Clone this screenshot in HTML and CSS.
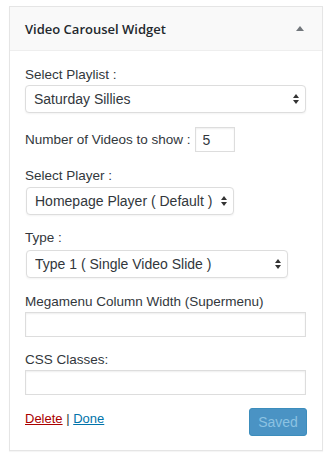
FILE: index.html
```html
<!DOCTYPE html>
<html lang="en">
<head>
  <meta charset="UTF-8" />
  <meta name="viewport" content="width=device-width, initial-scale=1.0"/>
  <title>Video Carousel Widget</title>
  <link rel="stylesheet" href="styles.css">
</head>
<body>
  <div class="widget">
    <div class="widget-top">
      <h3>Video Carousel Widget</h3>
      <span class="toggle"></span>
    </div>

    <form class="widget-inside">
      <div class="field first">
        <label for="playlist">Select Playlist :</label>
        <div class="select-wrap wide">
          <select id="playlist">
            <option>Saturday Sillies</option>
          </select>
          <svg class="arrows" width="6" height="10" viewBox="0 0 6 10"><path d="M3 0L6 4H0z M3 10L6 6H0z"/></svg>
        </div>
      </div>

      <div class="field inline">
        <label for="count">Number of Videos to show :</label>
        <input type="text" id="count" class="small" value="5">
      </div>

      <div class="field player-field">
        <label for="player">Select Player :</label>
        <div class="select-wrap player">
          <select id="player">
            <option>Homepage Player ( Default )</option>
          </select>
          <svg class="arrows" width="6" height="10" viewBox="0 0 6 10"><path d="M3 0L6 4H0z M3 10L6 6H0z"/></svg>
        </div>
      </div>

      <div class="field type-field">
        <label for="type">Type :</label>
        <div class="select-wrap type">
          <select id="type">
            <option>Type 1 ( Single Video Slide )</option>
          </select>
          <svg class="arrows" width="6" height="10" viewBox="0 0 6 10"><path d="M3 0L6 4H0z M3 10L6 6H0z"/></svg>
        </div>
      </div>

      <div class="field text-field">
        <label for="colwidth">Megamenu Column Width (Supermenu)</label>
        <input type="text" id="colwidth" class="wide-input">
      </div>

      <div class="field text-field last">
        <label for="classes">CSS Classes:</label>
        <input type="text" id="classes" class="wide-input">
      </div>

      <div class="widget-control">
        <div class="links">
          <a href="#" class="delete">Delete</a> | <a href="#" class="done">Done</a>
        </div>
        <button type="button" class="save-btn" disabled>Saved</button>
      </div>
    </form>
  </div>
</body>
</html>
```

FILE: styles.css
```css
body {
  margin: 0;
  padding: 6px 9px;
  background: #fff;
  font-family: "Liberation Sans", Arial, sans-serif;
  font-size: 13px;
  color: #32373c;
}

.widget {
  width: 314px;
  box-sizing: border-box;
  border: 1px solid #e5e5e5;
  box-shadow: 0 1px 1px rgba(0,0,0,0.04);
  background: #fff;
}

.widget-top {
  display: flex;
  justify-content: space-between;
  align-items: center;
  height: 43px;
  padding: 0 18px 0 15px;
  background: #f9f9f9;
  border-bottom: 1px solid #eee;
}

.widget-top h3 {
  margin: 0;
  font-family: "Open Sans", sans-serif;
  font-size: 13px;
  font-weight: 600;
  color: #23282d;
}

.toggle {
  width: 0;
  height: 0;
  border-left: 4px solid transparent;
  border-right: 4px solid transparent;
  border-bottom: 5px solid #72777c;
  margin-top: -1px;
}

.widget-inside {
  padding: 1px 15px 14px;
}

.field label {
  display: block;
  font-size: 13.5px;
  line-height: 16px;
}

.field.first { margin-top: 15px; }
.field.first label { margin-bottom: 2px; }

.field.inline {
  display: flex;
  align-items: center;
  margin-top: 14px;
}

.field.inline label {
  margin-right: 4px;
}

.player-field { margin-top: 16px; }
.player-field label { margin-bottom: 3px; }

.type-field { margin-top: 15px; }
.type-field label { margin-bottom: 4px; }

.text-field { margin-top: 16px; }
.text-field.last { margin-top: 15px; }
.text-field label { margin-bottom: 2px; }

.select-wrap {
  position: relative;
  height: 28px;
}

.select-wrap.wide { width: 281px; }
.select-wrap.player { width: 208px; margin-left: 1px; }
.select-wrap.type { width: 262px; margin-left: 1px; }

.select-wrap select {
  -webkit-appearance: none;
  appearance: none;
  display: block;
  width: 100%;
  height: 28px;
  margin: 0;
  padding: 0 20px 0 8px;
  border: 1px solid #ddd;
  border-radius: 4px;
  background: #fff;
  font-family: "Liberation Sans", Arial, sans-serif;
  font-size: 14px;
  color: #32373c;
  box-shadow: 0 1px 2px rgba(0,0,0,0.05);
}

.arrows {
  position: absolute;
  right: 7px;
  top: 9px;
  fill: #333;
}

input[type="text"] {
  display: block;
  box-sizing: border-box;
  height: 25px;
  margin: 0;
  padding: 0 7px;
  border: 1px solid #ddd;
  background: #fff;
  font-family: "Liberation Sans", Arial, sans-serif;
  font-size: 14px;
  color: #32373c;
  box-shadow: inset 0 1px 2px rgba(0,0,0,0.07);
}

input.small { width: 40px; }
input.wide-input { width: 281px; }

.widget-control {
  display: flex;
  justify-content: space-between;
  align-items: flex-start;
  margin-top: 13px;
}

.links {
  padding-top: 3px;
  line-height: 16px;
}

.links a { text-decoration: underline; }
.delete { color: #a00; }
.done { color: #0073aa; }

.save-btn {
  width: 58px;
  height: 28px;
  padding: 0;
  border: 1px solid #3c8dbc;
  border-radius: 3px;
  background: #4a93c4;
  color: #8cc2e2;
  font-family: "Liberation Sans", Arial, sans-serif;
  font-size: 14px;
}
```
